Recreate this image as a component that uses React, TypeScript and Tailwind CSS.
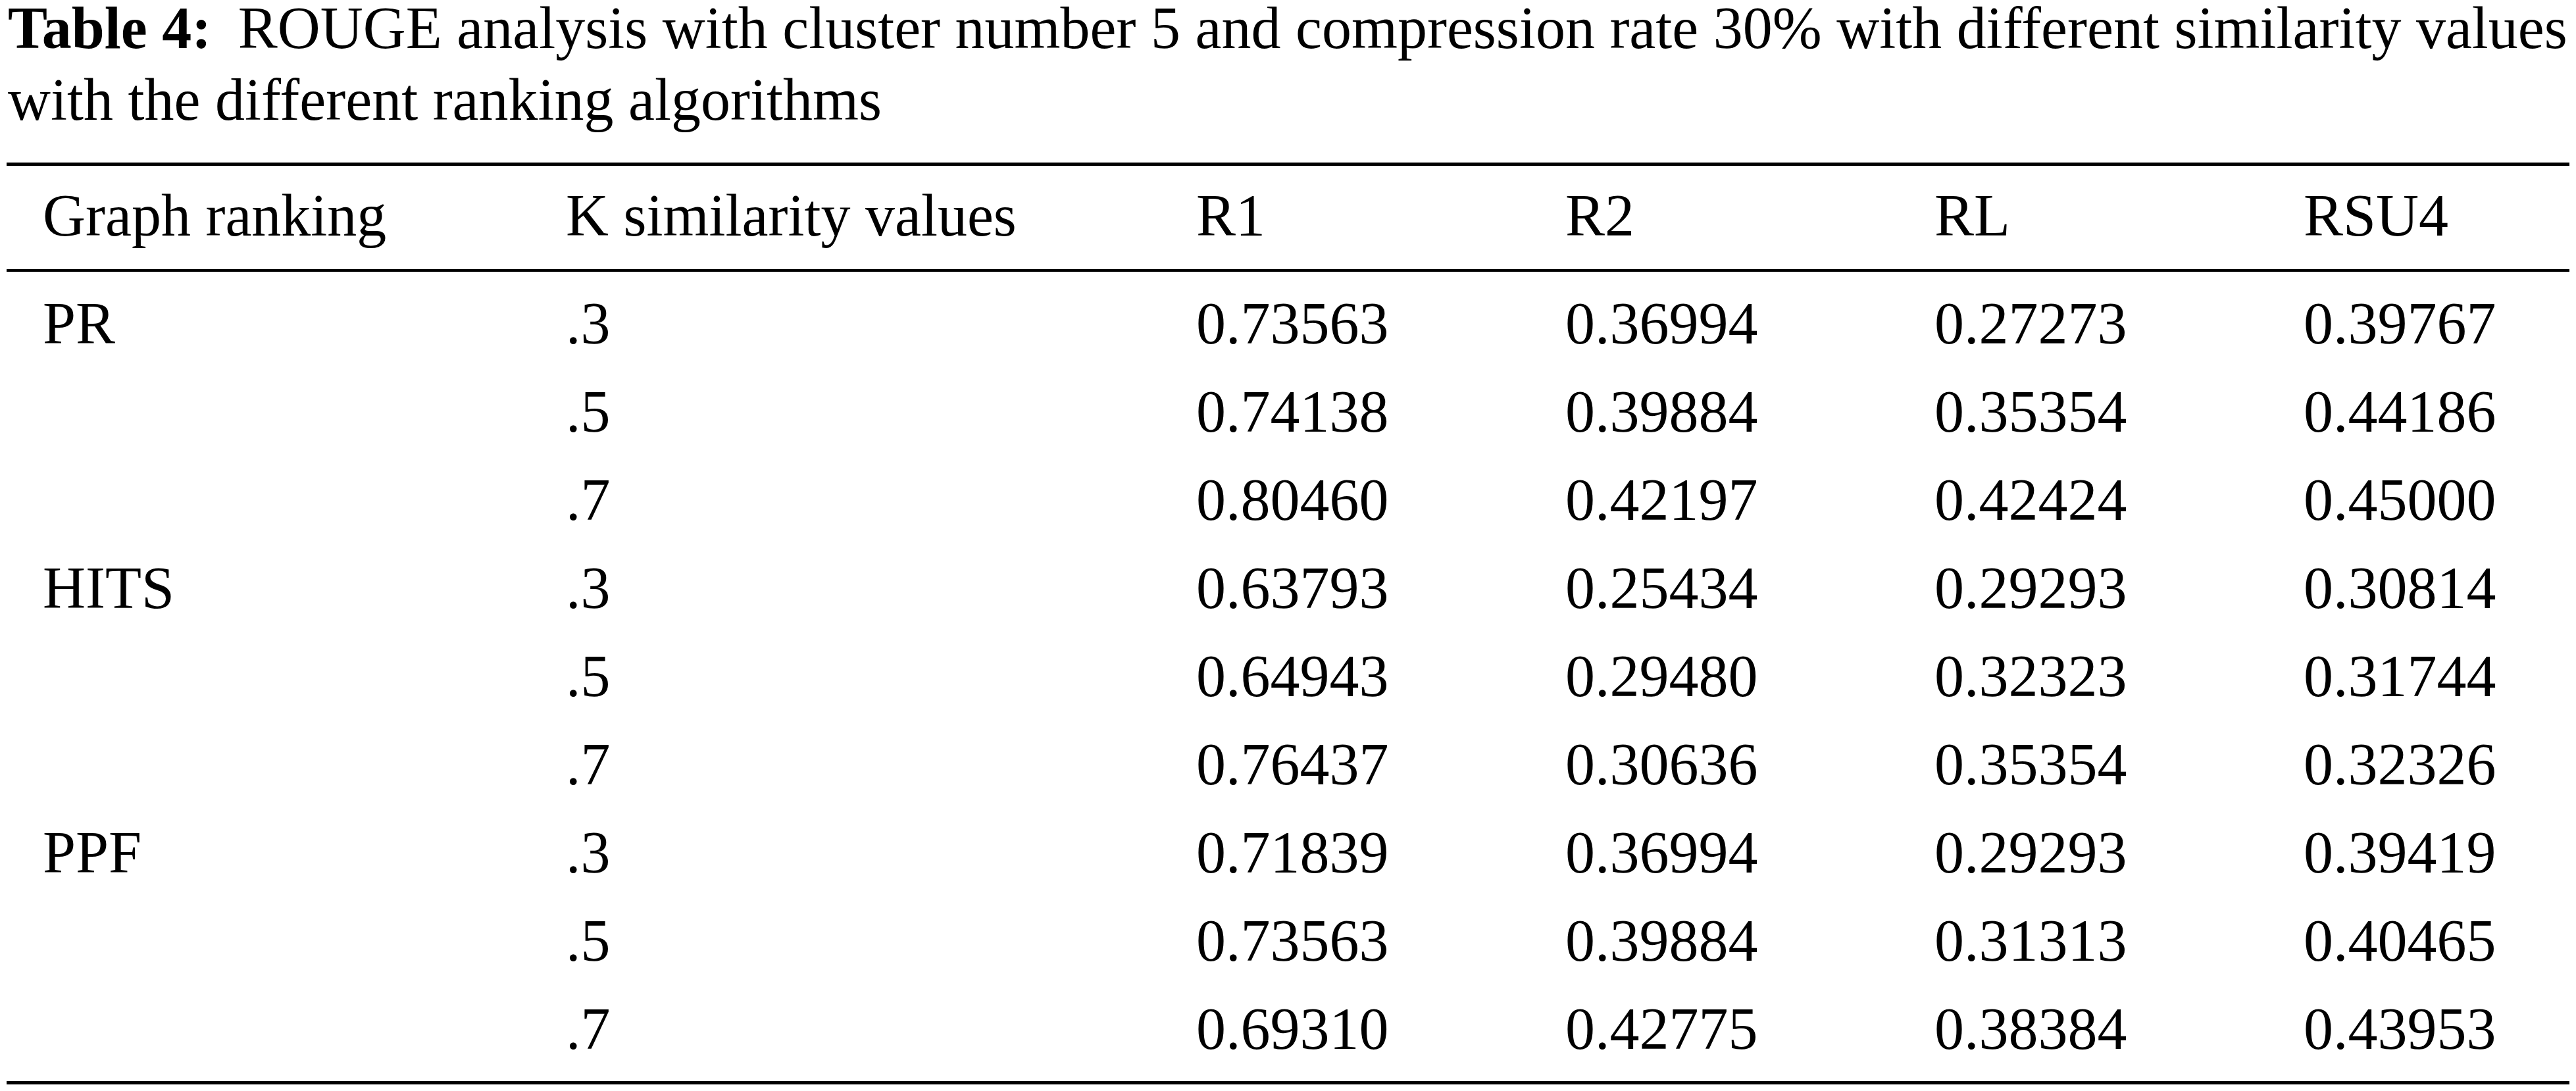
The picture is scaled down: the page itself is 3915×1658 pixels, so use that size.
const header = ["Graph ranking", "K similarity values", "R1", "R2", "RL", "RSU4"];

const rows: string[][] = [
  ["PR", ".3", "0.73563", "0.36994", "0.27273", "0.39767"],
  ["", ".5", "0.74138", "0.39884", "0.35354", "0.44186"],
  ["", ".7", "0.80460", "0.42197", "0.42424", "0.45000"],
  ["HITS", ".3", "0.63793", "0.25434", "0.29293", "0.30814"],
  ["", ".5", "0.64943", "0.29480", "0.32323", "0.31744"],
  ["", ".7", "0.76437", "0.30636", "0.35354", "0.32326"],
  ["PPF", ".3", "0.71839", "0.36994", "0.29293", "0.39419"],
  ["", ".5", "0.73563", "0.39884", "0.31313", "0.40465"],
  ["", ".7", "0.69310", "0.42775", "0.38384", "0.43953"],
];

export default function App() {
  return (
    <div
      className="min-h-screen w-[3915px] bg-white text-black"
      style={{ fontFamily: '"Liberation Serif", "Times New Roman", serif' }}
    >
      <div className="w-[3895px] ml-[10px]">
        {/* Caption */}
        <p className="-mt-[12px] pl-[2px] text-[90px] leading-[109px] whitespace-nowrap">
          <span className="font-bold">Table 4:</span>
          <span className="ml-[18px]">
            {" "}ROUGE analysis with cluster number 5 and compression rate 30% with different similarity values
          </span>
          <br />
          with the different ranking algorithms
        </p>

        {/* Table */}
        <div className="mt-[41px] border-t-[5px] border-black" />
        <div className="grid grid-cols-[795px_958px_561px_561px_561px_1fr] pl-[55px] pt-[21px] pb-[27px] text-[90px] leading-[109px] whitespace-nowrap">
          {header.map((h) => (
            <div key={h}>{h}</div>
          ))}
        </div>
        <div className="border-t-[4px] border-black" />
        <div className="pt-[12px] pb-[12px]">
          {rows.map((r, i) => (
            <div
              key={i}
              className="grid grid-cols-[795px_958px_561px_561px_561px_1fr] pl-[55px] text-[90px] leading-[134px] whitespace-nowrap"
            >
              {r.map((c, j) => (
                <div key={j}>{c}</div>
              ))}
            </div>
          ))}
        </div>
        <div className="border-t-[5px] border-black" />
      </div>
    </div>
  );
}
